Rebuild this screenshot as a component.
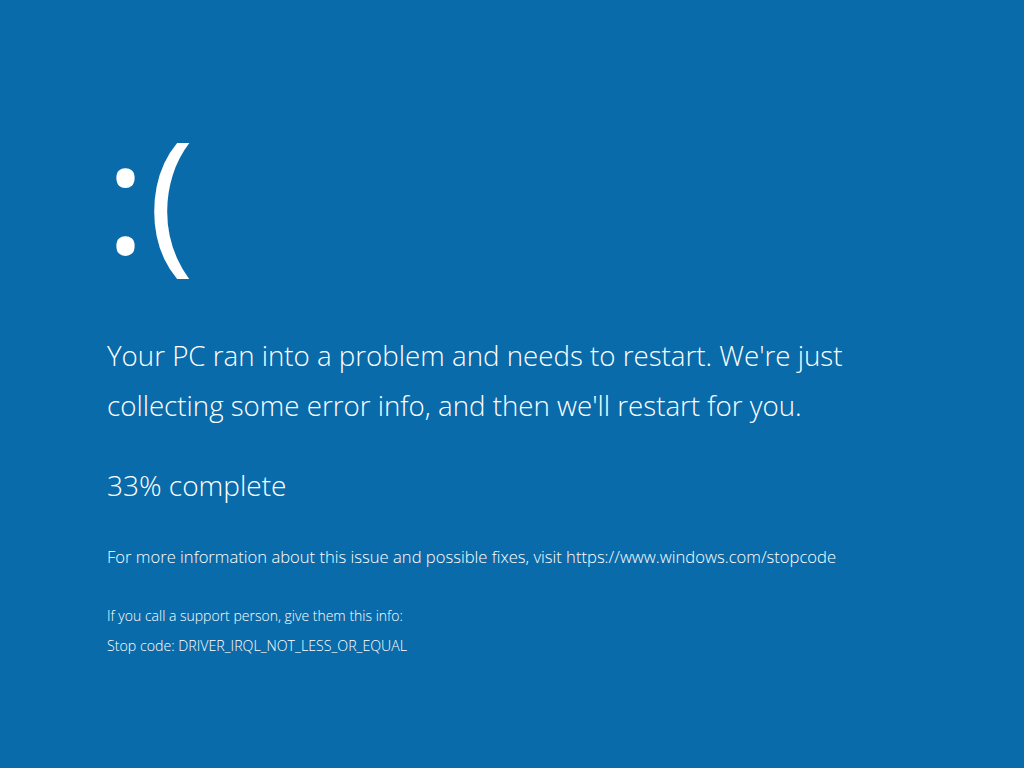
import React from 'react';

const App = () => {
    return (
        <div className="h-screen w-full overflow-hidden bg-[#0a6baa] text-white font-['Open_Sans',sans-serif] font-light pl-[107px] pt-[103px]">
            <div className="text-[156px] font-normal leading-[182px] h-[182px] tracking-[2px] -ml-[2px]">:(</div>
            <div className="mt-[45px] text-[27.7px] leading-[50px]">
                <p>Your PC ran into a problem and needs to restart. We're just</p>
                <p>collecting some error info, and then we'll restart for you.</p>
            </div>
            <p className="mt-[40px] text-[28px] leading-[30px]">33% complete</p>
            <p className="mt-[47px] text-[16.6px] leading-[20px]">
                For more information about this issue and possible fixes, visit https://www.windows.com/stopcode
            </p>
            <p className="mt-[40px] text-[14px] leading-[18px]">If you call a support person, give them this info:</p>
            <p className="mt-[12px] text-[14.2px] leading-[18px]">Stop code: DRIVER_IRQL_NOT_LESS_OR_EQUAL</p>
        </div>
    );
};

export default App;
